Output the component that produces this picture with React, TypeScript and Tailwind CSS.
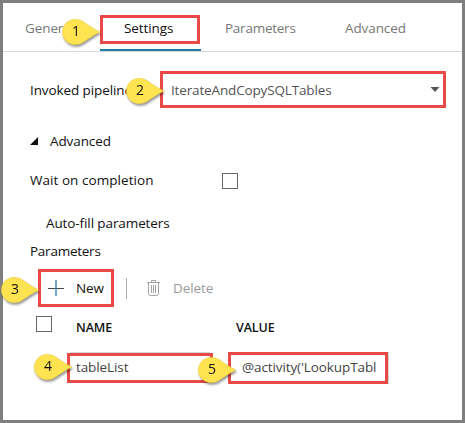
import type { ReactNode } from "react";

function Callout({ n, place }: { n: number; place: string }) {
  return (
    <svg
      className={`absolute z-10 overflow-visible drop-shadow-[1px_2px_1px_rgba(0,0,0,0.4)] ${place}`}
      width="38"
      height="26"
      viewBox="0 0 38 26"
    >
      <path
        d="M38 13 C31 9.5 26 6 22 3.2 C19 1.2 16.5 0.3 13 0.3 A12.7 12.7 0 0 0 13 25.7 C16.5 25.7 19 24.8 22 22.8 C26 20 31 16.5 38 13Z"
        fill="#ffe351"
        stroke="#e3c62d"
        strokeWidth="0.4"
      />
      <text x="14" y="17" textAnchor="middle" fontSize="14" fill="#111" fontFamily="Open Sans, sans-serif">
        {n}
      </text>
    </svg>
  );
}

function Highlight({ size, children }: { size: string; children?: ReactNode }) {
  return <div className={`relative flex shrink-0 items-center border-3 border-[#e94a47] ${size}`}>{children}</div>;
}

function Checkbox() {
  return <span className="block size-4 shrink-0 border border-[#666]" />;
}

function Trash() {
  return (
    <svg width="13" height="16" viewBox="0 0 13 16" fill="none" stroke="#a3a3a3">
      <path d="M0 2.5h13M4.5 2.5v-2h4v2M1.5 2.5v11q0 2 2 2h6q2 0 2-2v-11M4.5 5v8M6.5 5v8M8.5 5v8" />
    </svg>
  );
}

export default function App() {
  return (
    <div className="h-[423px] w-[465px] border-3 border-[#7f7f7f] bg-white font-['Open_Sans','Noto_Sans',sans-serif] text-[13.5px] leading-[18px] tracking-[-0.1px] whitespace-nowrap text-[#111]">
      <nav className="flex h-[49px] border-b border-[#d9d9d9] text-[#777]">
        <div className="w-[97px] pt-4 pl-[22px]">General</div>
        <div className="relative w-[101px] pt-3">
          <Highlight size="h-[29px] w-[100px]">
            <span className="pb-[3px] pl-[21px] text-[#111]">Settings</span>
            <Callout n={1} place="top-[1px] -left-[41px]" />
          </Highlight>
          <div className="mt-[5px] h-[2px] bg-[#1c80a5]" />
        </div>
        <div className="w-[120px] pt-4 pl-[24px] tracking-[-0.25px]">Parameters</div>
        <div className="pt-4 pl-[24px]">Advanced</div>
      </nav>

      <div className="mt-[19px] flex h-[37px] items-center pl-[27px]">
        <span className="w-[130px]">Invoked pipeline</span>
        <Highlight size="h-[37px] w-[286px]">
          <Callout n={2} place="top-[4px] -left-[37px]" />
          <span className="flex-1 pl-[8px] tracking-[-0.15px] text-[#555]">IterateAndCopySQLTables</span>
          <svg className="mr-[3px]" width="10" height="5" viewBox="0 0 10 5">
            <path d="M0.5 0h9L5 5z" fill="#555" />
          </svg>
        </Highlight>
      </div>

      <div className="mt-[24px] flex h-[18px] items-center pl-[27px]">
        <svg width="9" height="9" viewBox="0 0 9 9">
          <path d="M8 0v8H0z" fill="#111" />
        </svg>
        <span className="pl-[11px]">Advanced</span>
      </div>
      <div className="mt-[21px] flex h-[18px] items-end pl-[27px]">
        <span className="w-[192px] tracking-[0.05px]">Wait on completion</span>
        <Checkbox />
      </div>
      <div className="mt-[25px] pl-[43px]">Auto-fill parameters</div>
      <div className="mt-[10px] pl-[27px] tracking-[-0.25px]">Parameters</div>

      <div className="mt-[9px] flex h-[38px] items-center pl-[35px] text-[#999]">
        <Highlight size="h-[38px] w-[76px]">
          <Callout n={3} place="top-[5px] -left-[40px]" />
          <svg className="ml-[7px]" width="16" height="16" viewBox="0 0 16 16" fill="none">
            <path d="M0 8.5h16" stroke="#444" />
            <path d="M8 0v16" stroke="#3583aa" strokeWidth="1.4" />
          </svg>
          <span className="pl-[12px] text-[#111]">New</span>
        </Highlight>
        <span className="ml-[12px] h-[21px] w-px bg-[#aaa]" />
        <span className="ml-[20px]">
          <Trash />
        </span>
        <span className="pl-[13px]">Delete</span>
      </div>

      <div className="mt-[9px] flex h-[20px] font-semibold">
        <div className="w-[40px] pl-[33px]">
          <Checkbox />
        </div>
        <span className="ml-[33px] w-[160px] pt-[3px] text-[12.5px]">NAME</span>
        <span className="pt-[3px] text-[12.5px]">VALUE</span>
      </div>

      <div className="mt-[16px] flex h-[32px] items-center pl-[64px] text-[#444]">
        <Highlight size="h-[30px] w-[146px]">
          <span className="absolute -top-1 left-0 h-px w-[140px] bg-[#d5d5d5]" />
          <Callout n={4} place="-top-[2px] -left-[36px]" />
          <span className="pb-[3px] pl-[6px]">tableList</span>
        </Highlight>
        <div className="ml-[15px] border-r border-[#d5d5d5]">
          <Highlight size="h-[32px] w-[160px]">
            <Callout n={5} place="top-[2px] -left-[33px]" />
            <span className="pb-[3px] pl-[11px]">@activity('LookupTabl</span>
          </Highlight>
        </div>
      </div>
    </div>
  );
}
